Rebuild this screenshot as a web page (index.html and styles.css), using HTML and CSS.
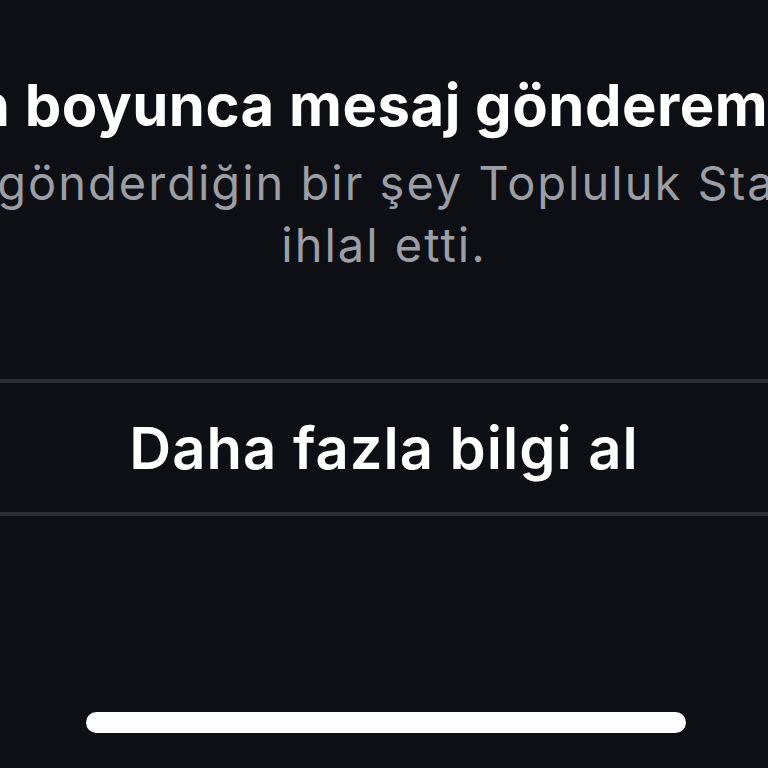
FILE: index.html
```html
<!DOCTYPE html>
<html lang="tr">
<head>
    <meta charset="UTF-8">
    <meta name="viewport" content="width=device-width, initial-scale=1.0">
    <title>Mesaj gönderilemiyor</title>
    <link rel="stylesheet" href="styles.css">
</head>
<body>
    <div class="sheet">
        <div class="notice">
            <h1 class="title">1 gün boyunca mesaj gönderemezsin</h1>
            <p class="desc">
                <span class="desc-line first">Daha önce gönderdiğin bir şey Topluluk Standartlarımızı</span>
                <span class="desc-line">ihlal etti.</span>
            </p>
        </div>
        <div class="action">
            <button class="action-btn">Daha fazla bilgi al</button>
        </div>
        <div class="spacer"></div>
        <div class="home-bar"></div>
    </div>
</body>
</html>
```

FILE: styles.css
```css
html, body { margin: 0; padding: 0; height: 100%; }
body { background: #0d0f14; color: #fff; font-family: Inter, "Noto Sans", sans-serif; overflow: hidden; }
.sheet { display: flex; flex-direction: column; height: 768px; }
.notice { margin: 0 -700px; text-align: center; white-space: nowrap; padding-top: 65px; height: 379px; box-sizing: border-box; }
.title { margin: 0; padding-left: 14px; font-size: 58px; font-weight: 700; line-height: 80px; letter-spacing: 0.5px; }
.desc { margin: 7px 0 0; font-size: 47px; font-weight: 400; line-height: 62px; letter-spacing: 2px; color: #9b9ea5; }
.desc-line { display: block; }
.desc-line.first { padding-left: 34px; }
.action { border-top: 4px solid #2c2e33; border-bottom: 4px solid #2c2e33; height: 129px; display: flex; align-items: center; justify-content: center; }
.action-btn { background: none; border: none; color: #fff; font-family: inherit; font-size: 58px; font-weight: 600; letter-spacing: 1px; padding: 0; cursor: pointer; }
.spacer { height: 196px; }
.home-bar { width: 600px; height: 21px; margin-left: 86px; background: #fdfdff; border-radius: 11px; }
```
